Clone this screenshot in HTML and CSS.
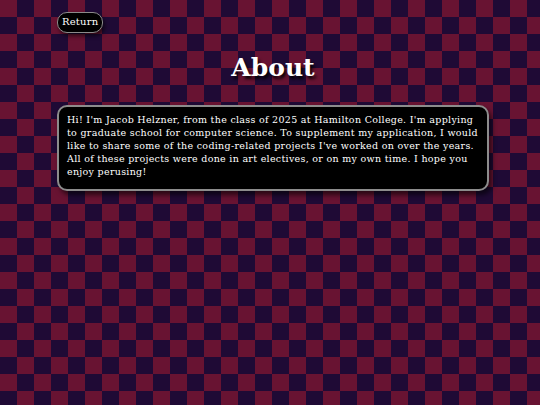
FILE: index.html
```html
<!DOCTYPE html>
<html lang="en">
<head>
	<meta charset="UTF-8">
	<title>About</title>
	<link rel="stylesheet" href="styles.css">
</head>
<body>
	<div class="page">
		<nav class="top-nav">
			<a class="return-btn" href="#">Return</a>
		</nav>
		<h1 class="title">About</h1>
		<div class="about-box">
			<p>Hi! I'm Jacob Helzner, from the class of 2025 at Hamilton College. I'm applying to graduate school for computer science. To supplement my application, I would like to share some of the coding-related projects I've worked on over the years. All of these projects were done in art electives, or on my own time. I hope you enjoy perusing!</p>
		</div>
	</div>
</body>
</html>
```
FILE: styles.css
```css
*{
	box-sizing: border-box;
}
html, body{
	height: 100%;
}
body{
	margin: 0;
	font-family: "DejaVu Serif", serif;
	color: #fff;
	background-color: #1f0a35;
	/* checkerboard: 17px squares */
	background-image: conic-gradient(#1f0a35 25%, #681332 0 50%, #1f0a35 0 75%, #681332 0);
	background-size: 34px 34px;
}
.page{
	width: 432px;
	margin-left: 57px;
	padding-top: 12px;
}
.top-nav{
	display: flex;
}
.return-btn{
	padding: 3px 4px 4px;
	font-size: 10px;
	line-height: 12px;
	letter-spacing: 0.2px;
	color: #fff;
	text-decoration: none;
	background-color: #000;
	border: 1px solid #8a8a8a;
	border-radius: 10px;
	box-shadow: 2px 3px 4px rgba(0, 0, 0, 0.6);
}
.title{
	margin: 20px 0 23px;
	text-align: center;
	font-size: 25px;
	font-weight: bold;
	text-shadow: 2px 3px 3px rgba(0, 0, 0, 0.9);
}
.about-box{
	background-color: #000;
	border: 2px solid #8c8c8c;
	border-radius: 10px;
	padding: 6px 8px 11px;
	box-shadow: 3px 4px 5px rgba(0, 0, 0, 0.6);
}
.about-box p{
	margin: 0;
	font-size: 9.5px;
	line-height: 13px;
	letter-spacing: 0.3px;
}
```
